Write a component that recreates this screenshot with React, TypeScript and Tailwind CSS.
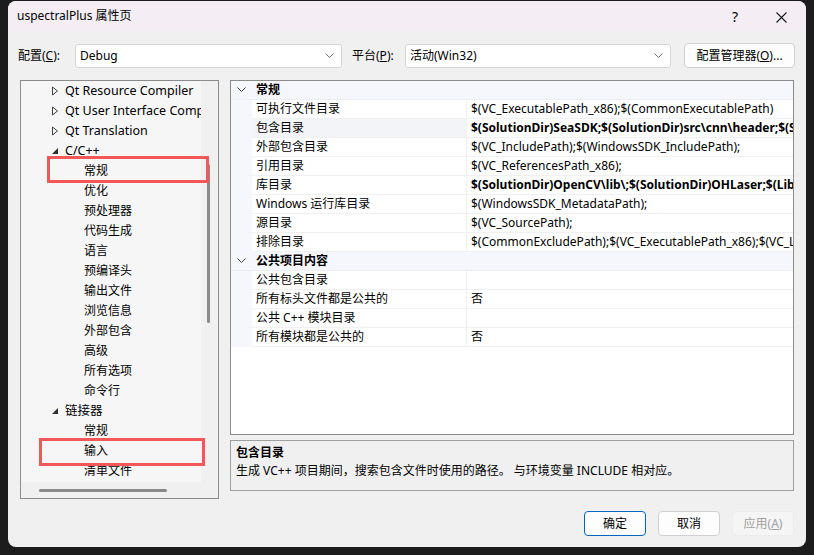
import React from "react";

const font = { fontFamily: '"Noto Sans", "Noto Sans CJK SC", sans-serif' };

type TreeItem = { label: string; level: 1 | 2; arrow?: "closed" | "open" };

const treeItems: TreeItem[] = [
  { label: "Qt Resource Compiler", level: 1, arrow: "closed" },
  { label: "Qt User Interface Compiler", level: 1, arrow: "closed" },
  { label: "Qt Translation", level: 1, arrow: "closed" },
  { label: "C/C++", level: 1, arrow: "open" },
  { label: "常规", level: 2 },
  { label: "优化", level: 2 },
  { label: "预处理器", level: 2 },
  { label: "代码生成", level: 2 },
  { label: "语言", level: 2 },
  { label: "预编译头", level: 2 },
  { label: "输出文件", level: 2 },
  { label: "浏览信息", level: 2 },
  { label: "外部包含", level: 2 },
  { label: "高级", level: 2 },
  { label: "所有选项", level: 2 },
  { label: "命令行", level: 2 },
  { label: "链接器", level: 1, arrow: "open" },
  { label: "常规", level: 2 },
  { label: "输入", level: 2 },
  { label: "清单文件", level: 2 },
];

type Row =
  | { kind: "header"; label: string }
  | { kind: "prop"; name: string; value: string; bold?: boolean; selected?: boolean };

const rows: Row[] = [
  { kind: "header", label: "常规" },
  { kind: "prop", name: "可执行文件目录", value: "$(VC_ExecutablePath_x86);$(CommonExecutablePath)" },
  {
    kind: "prop",
    name: "包含目录",
    value: "$(SolutionDir)SeaSDK;$(SolutionDir)src\\cnn\\header;$(SolutionDir)include;$(IncludePath)",
    bold: true,
    selected: true,
  },
  { kind: "prop", name: "外部包含目录", value: "$(VC_IncludePath);$(WindowsSDK_IncludePath);" },
  { kind: "prop", name: "引用目录", value: "$(VC_ReferencesPath_x86);" },
  {
    kind: "prop",
    name: "库目录",
    value: "$(SolutionDir)OpenCV\\lib\\;$(SolutionDir)OHLaser;$(LibraryPath)",
    bold: true,
  },
  { kind: "prop", name: "Windows 运行库目录", value: "$(WindowsSDK_MetadataPath);" },
  { kind: "prop", name: "源目录", value: "$(VC_SourcePath);" },
  {
    kind: "prop",
    name: "排除目录",
    value: "$(CommonExcludePath);$(VC_ExecutablePath_x86);$(VC_LibraryPath_x86)",
  },
  { kind: "header", label: "公共项目内容" },
  { kind: "prop", name: "公共包含目录", value: "" },
  { kind: "prop", name: "所有标头文件都是公共的", value: "否" },
  { kind: "prop", name: "公共 C++ 模块目录", value: "" },
  { kind: "prop", name: "所有模块都是公共的", value: "否" },
];

function Chevron({ className }: { className?: string }) {
  return (
    <svg className={className} width="9" height="6" viewBox="0 0 9 6" fill="none" stroke="currentColor" strokeWidth="1">
      <path d="M0.5 0.5 L4.5 4.5 L8.5 0.5" />
    </svg>
  );
}

function TreeArrow({ open }: { open: boolean }) {
  return open ? (
    <svg width="8" height="8" viewBox="0 0 8 8">
      <path d="M7 1 L7 7 L1 7 Z" fill="#303030" />
    </svg>
  ) : (
    <svg width="8" height="10" viewBox="0 0 8 10" fill="none" stroke="#404040" strokeWidth="1">
      <path d="M1.5 1 L6.5 5 L1.5 9 Z" />
    </svg>
  );
}

function Select({ value, width }: { value: string; width: string }) {
  return (
    <div className={`${width} shrink-0 h-[24px] bg-white border border-[#d5d5d5] rounded-[3px] flex items-center justify-between pl-[4px] pr-[7px]`}>
      <span className="text-[12px] text-black">{value}</span>
      <Chevron className="text-[#707070]" />
    </div>
  );
}

export default function App() {
  return (
    <div className="w-[814px] h-[555px] bg-[#1c1c1c] overflow-hidden text-black" style={font}>
      <div className="ml-[8px] mt-[1px] w-[798px] h-[546px] bg-[#f0f0f0] rounded-lg flex flex-col overflow-hidden">
        {/* Title bar */}
        <div className="h-[30px] bg-[#f4eef4] flex items-center pl-[9px] shrink-0">
          <span className="text-[12px]">uspectralPlus 属性页</span>
          <span className="ml-auto w-[46px] text-center text-[14px]">?</span>
          <span className="w-[46px] text-center mr-[2px]">
            <svg className="inline" width="11" height="11" viewBox="0 0 11 11" stroke="#1a1a1a" strokeWidth="1.1">
              <path d="M0.5 0.5 L10.5 10.5 M10.5 0.5 L0.5 10.5" />
            </svg>
          </span>
        </div>

        {/* Config row */}
        <div className="flex items-center mt-[12px] px-[10px] h-[25px] shrink-0">
          <span className="text-[12px] w-[57px] shrink-0">
            配置(<span className="underline">C</span>):
          </span>
          <Select value="Debug" width="w-[267px]" />
          <span className="text-[12px] ml-[10px] w-[53px] shrink-0">
            平台(<span className="underline">P</span>):
          </span>
          <Select value="活动(Win32)" width="w-[266px]" />
          <div className="ml-[13px] w-[111px] shrink-0 h-[25px] bg-[#fdfdfd] border border-[#d0d0d0] rounded-[4px] flex items-center justify-center text-[12px]">
            配置管理器(<span className="underline">O</span>)...
          </div>
        </div>

        {/* Main area */}
        <div className="flex mt-[12px] px-[12px] gap-[11px] shrink-0">
          {/* Tree */}
          <div className="relative w-[199px] shrink-0 h-[419px] border border-[#8c8c8c] bg-[#f0f0f0] flex flex-col">
            <div className="flex flex-1 min-h-0">
              <div className="w-[180px] shrink-0 h-[401px] bg-[#f6f6f6] overflow-hidden">
                {treeItems.map((item, i) => (
                  <div key={i} className="h-[20px] flex items-center whitespace-nowrap text-[12.5px]">
                    {item.level === 1 ? (
                      <>
                        <span className="w-[44px] shrink-0 flex justify-end pr-[6px]">
                          {item.arrow && <TreeArrow open={item.arrow === "open"} />}
                        </span>
                        <span>{item.label}</span>
                      </>
                    ) : (
                      <span className="pl-[63px] text-[12px]">{item.label}</span>
                    )}
                  </div>
                ))}
              </div>
              <div className="flex-1 relative">
                <div className="absolute left-[6px] top-[83px] w-[3px] h-[159px] bg-[#8a8a8a] rounded-full" />
              </div>
            </div>
            <div className="h-[16px] relative">
              <div className="absolute left-[18px] top-[7px] w-[128px] h-[3px] bg-[#8a8a8a] rounded-full" />
            </div>

            {/* annotation boxes */}
            <div className="absolute left-[26px] top-[75px] w-[162px] h-[27px] border-[3px] border-[#f25858]" />
            <div className="absolute left-[18px] top-[357px] w-[166px] h-[28px] border-[3px] border-[#f25858]" />
          </div>

          {/* Right column */}
          <div className="flex-1 min-w-0 flex flex-col">
            <div className="h-[355px] border border-[#8c8c8c] bg-white overflow-hidden">
              {rows.map((row, i) =>
                row.kind === "header" ? (
                  <div key={i} className="h-[19px] bg-[#f5f7fc] flex items-center border-b border-[#eceef3]">
                    <span className="w-[21px] shrink-0 flex justify-center">
                      <Chevron className="text-[#404040]" />
                    </span>
                    <span className="pl-[4px] text-[12px] font-bold">{row.label}</span>
                  </div>
                ) : (
                  <div key={i} className="h-[19px] flex">
                    <div className="w-[21px] bg-[#f5f7fc] shrink-0" />
                    <div
                      className={`w-[215px] shrink-0 pl-[4px] flex items-center text-[12px] border-b border-r border-[#f0f0f0] whitespace-nowrap ${
                        row.selected ? "bg-[#f3f4f7]" : "bg-white"
                      }`}
                    >
                      {row.name}
                    </div>
                    <div
                      className={`flex-1 min-w-0 pl-[4px] flex items-center text-[12px] border-b border-[#f0f0f0] whitespace-nowrap overflow-hidden ${
                        row.bold ? "font-bold" : ""
                      }`}
                    >
                      {row.value}
                    </div>
                  </div>
                )
              )}
            </div>

            <div className="mt-[5px] h-[51px] border border-[#a0a0a0] bg-[#f0f0f0] px-[5px] pt-[3px]">
              <div className="text-[12px] font-bold leading-[18px]">包含目录</div>
              <div className="text-[12px] leading-[18px] whitespace-nowrap">
                生成 VC++ 项目期间，搜索包含文件时使用的路径。 与环境变量 INCLUDE 相对应。
              </div>
            </div>
          </div>
        </div>

        {/* Buttons */}
        <div className="flex justify-end gap-[12px] mt-[12px] pr-[12px]">
          <div className="w-[62px] h-[25px] rounded-[4px] border border-[#0067c0] bg-[#fdfdfd] flex items-center justify-center text-[12px]">
            确定
          </div>
          <div className="w-[62px] h-[25px] rounded-[4px] border border-[#d0d0d0] bg-[#fdfdfd] flex items-center justify-center text-[12px]">
            取消
          </div>
          <div className="w-[62px] h-[25px] rounded-[4px] border border-[#ececec] bg-[#f5f5f5] flex items-center justify-center text-[12px] text-[#a0a0a0]">
            应用(<span className="underline">A</span>)
          </div>
        </div>
      </div>
    </div>
  );
}
